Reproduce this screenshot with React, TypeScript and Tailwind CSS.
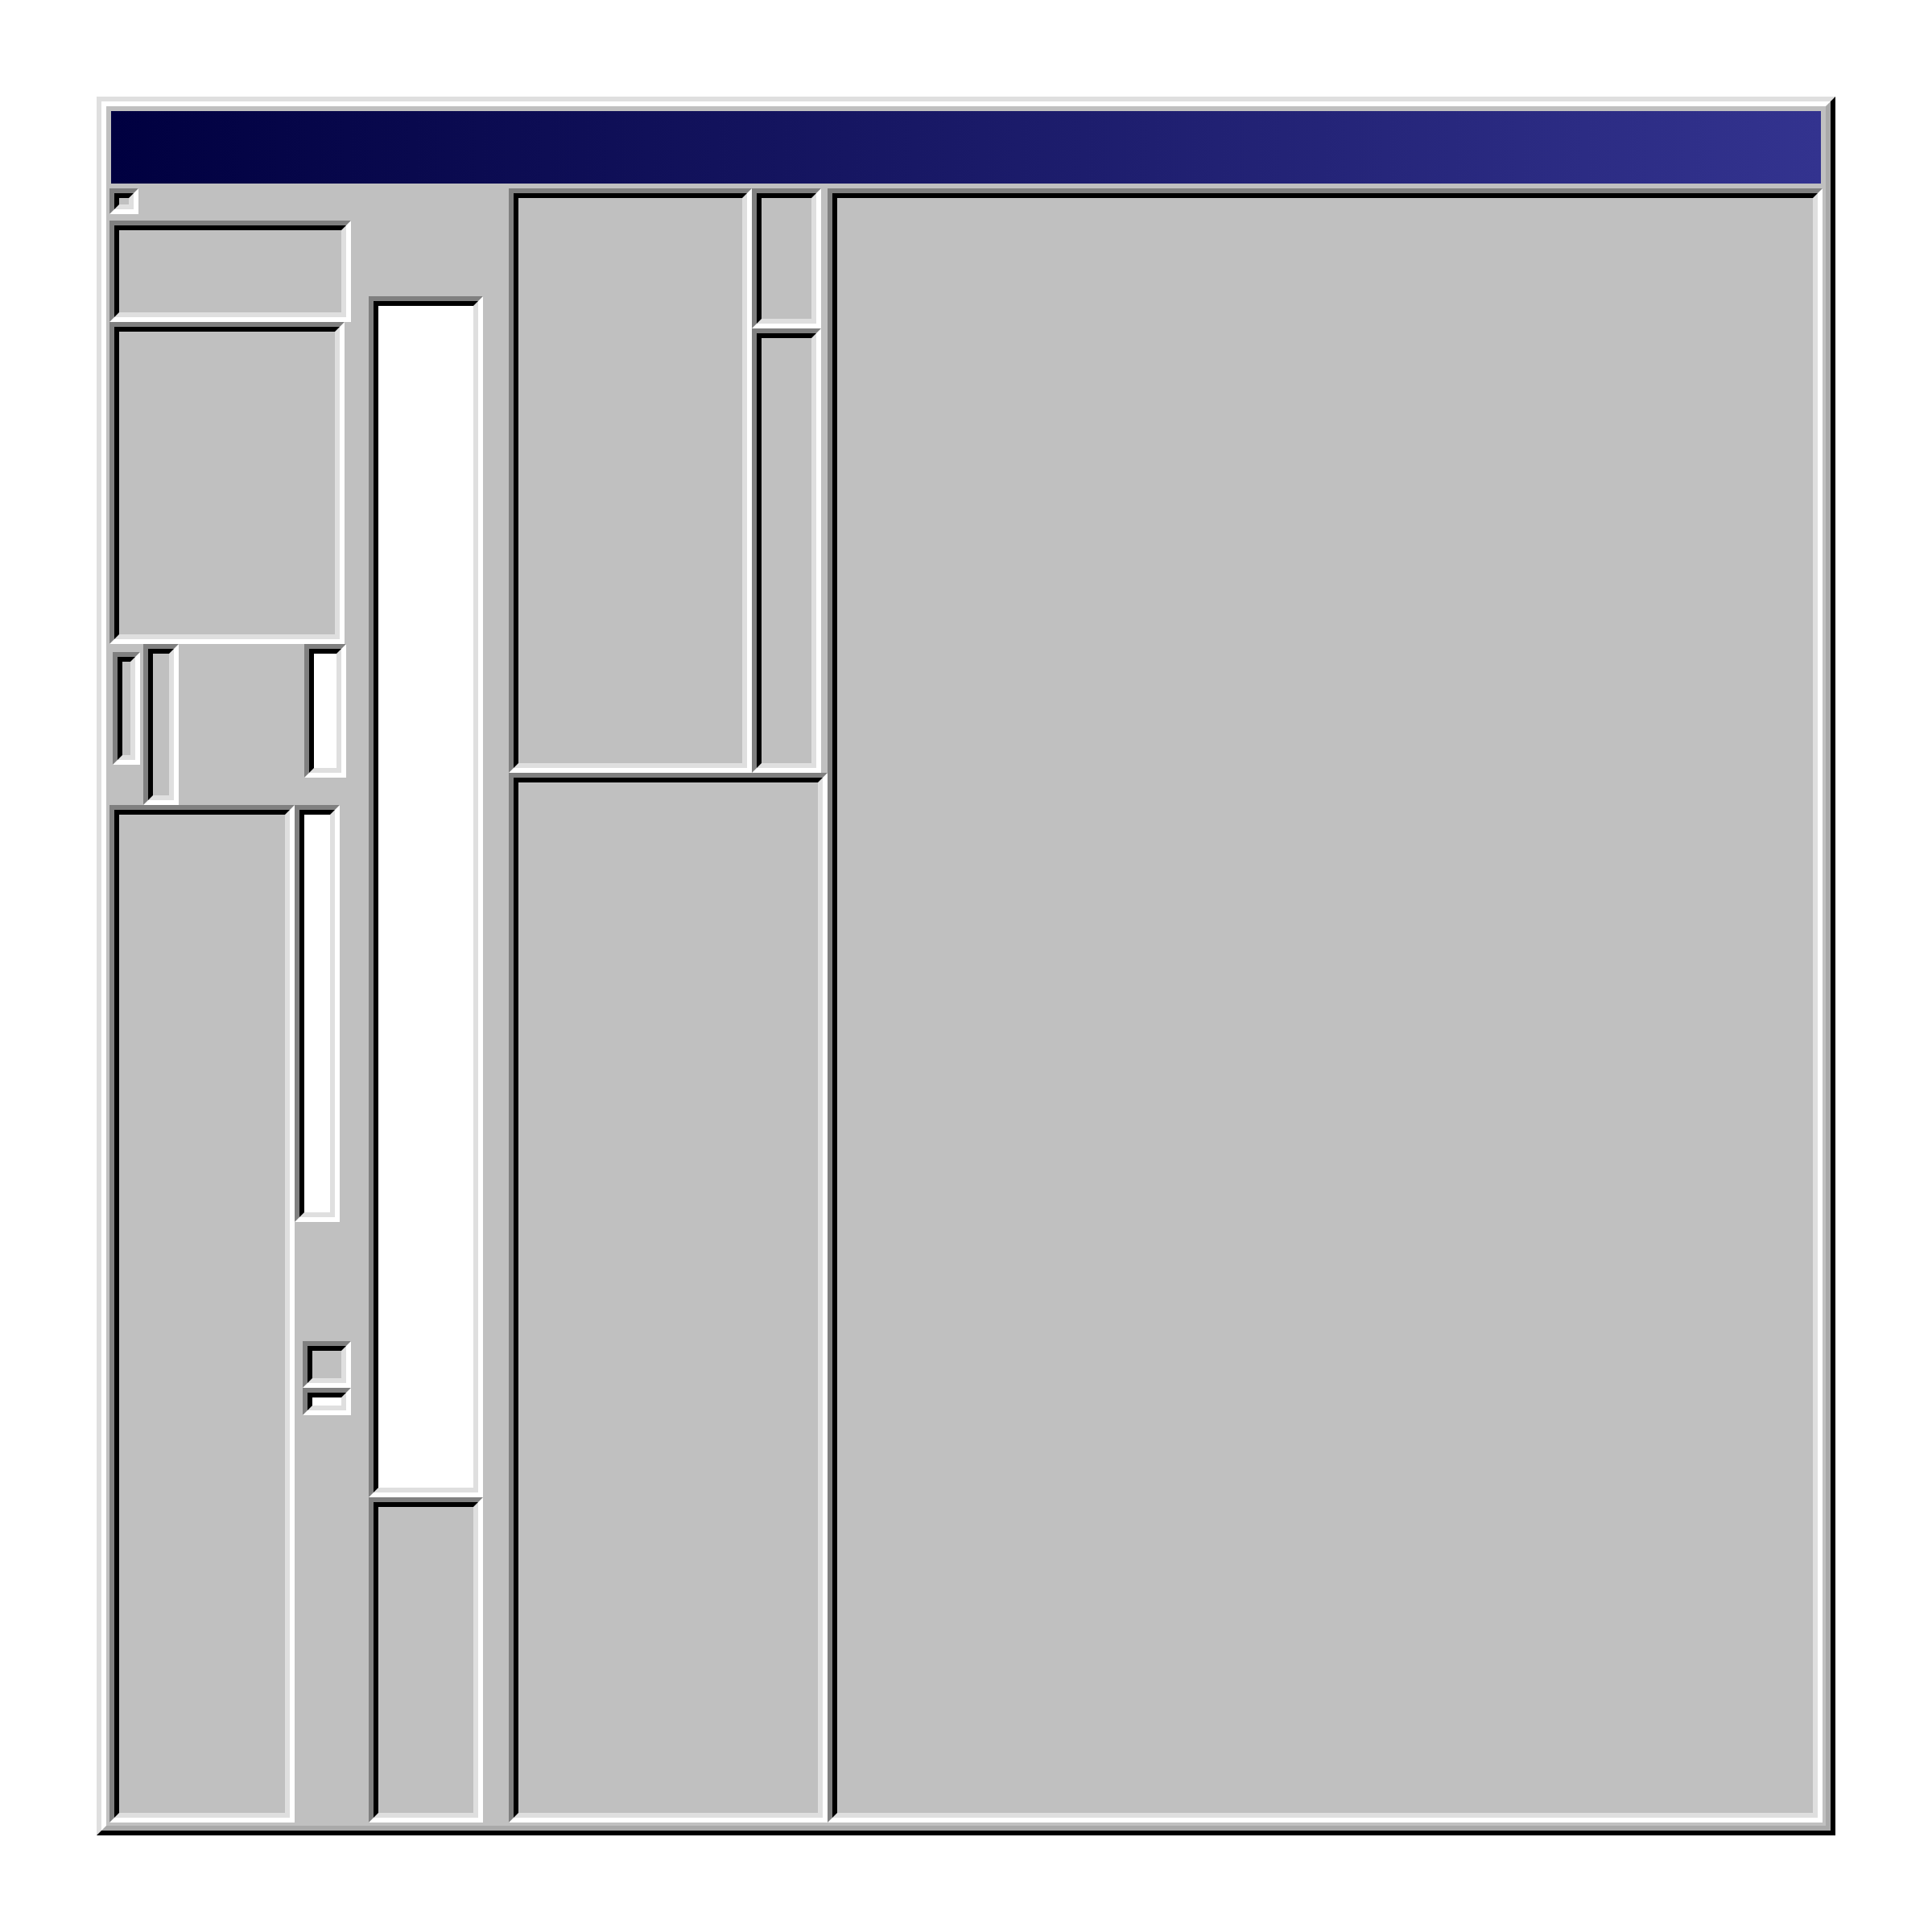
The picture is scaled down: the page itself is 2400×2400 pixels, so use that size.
import React from "react";

function Sunken({ className = "", inner = "bg-[#c0c0c0]" }: { className?: string; inner?: string }) {
  return (
    <div
      className={`shrink-0 border-[6px] border-t-[#808080] border-l-[#808080] border-r-white border-b-white ${className}`}
    >
      <div
        className={`h-full w-full border-[6px] border-t-black border-l-black border-r-[#dfdfdf] border-b-[#dfdfdf] ${inner}`}
      />
    </div>
  );
}

export default function App() {
  return (
    <div className="w-[2400px] h-[2400px] bg-white p-[120px]">
      <div className="w-[2160px] h-[2160px] border-[6px] border-t-[#dfdfdf] border-l-[#dfdfdf] border-r-black border-b-black">
        <div className="h-full w-full border-[6px] border-t-white border-l-white border-r-[#a9a9a9] border-b-[#a9a9a9] bg-[#c0c0c0] p-[4px] flex flex-col">
          {/* Title bar */}
          <div className="mx-[2px] mt-[2px] h-[90px] shrink-0 bg-[linear-gradient(to_right,#000040,#33338f)]" />
          {/* Content */}
          <div className="mt-[6px] flex flex-row h-[2030px]">
            {/* Column 1 */}
            <div className="w-[300px] shrink-0 flex flex-col">
              <Sunken className="w-[36px] h-[32px]" />
              <Sunken className="mt-[8px] w-[300px] h-[126px]" />
              <Sunken className="w-[292px] h-[400px]" />
              <div className="flex flex-row items-start h-[200px] shrink-0">
                <Sunken className="ml-[4px] mt-[10px] w-[34px] h-[140px]" />
                <Sunken className="ml-[4px] w-[44px] h-[200px]" />
                <Sunken className="ml-[156px] w-[52px] h-[166px]" inner="bg-white" />
              </div>
              <div className="flex flex-row items-start">
                <Sunken className="w-[230px] h-[1264px]" />
                <div className="w-[70px] flex flex-col">
                  <Sunken className="w-[56px] h-[518px]" inner="bg-white" />
                  <Sunken className="mt-[148px] ml-[10px] w-[60px] h-[58px]" />
                  <Sunken className="ml-[10px] w-[60px] h-[34px]" inner="bg-white" />
                </div>
              </div>
            </div>
            {/* Column 2 */}
            <div className="ml-[22px] w-[142px] shrink-0 flex flex-col pt-[134px]">
              <Sunken className="w-[142px] h-[1492px]" inner="bg-white" />
              <Sunken className="w-[142px] h-[404px]" />
            </div>
            {/* Column 3 */}
            <div className="ml-[32px] w-[396px] shrink-0 flex flex-col">
              <div className="flex flex-row h-[726px] shrink-0">
                <Sunken className="w-[302px] h-[726px]" />
                <div className="w-[86px] flex flex-col">
                  <Sunken className="w-[86px] h-[174px]" />
                  <Sunken className="w-[86px] h-[552px]" />
                </div>
              </div>
              <Sunken className="w-[396px] h-[1304px]" />
            </div>
            {/* Column 4 */}
            <Sunken className="w-[1236px] h-[2030px]" />
          </div>
        </div>
      </div>
    </div>
  );
}
